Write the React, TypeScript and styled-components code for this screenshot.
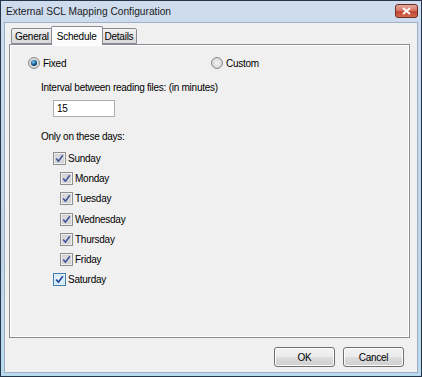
import React from 'react';
import styled, { createGlobalStyle } from 'styled-components';

const GlobalStyle = createGlobalStyle`
  html, body {
    margin: 0;
    padding: 0;
    background: #ffffff;
  }
  * {
    box-sizing: border-box;
  }
`;

const Window = styled.div`
  width: 422px;
  height: 377px;
  display: flex;
  flex-direction: column;
  border: 1px solid #24364a;
  background: linear-gradient(#cedcee, #c2d3e8 60%, #b9d9ec);
  padding: 0 3px 3px 3px;
  font-family: "Liberation Sans", Arial, sans-serif;
  font-size: 10px;
  letter-spacing: -0.25px;
  color: #000;
`;

const TitleBar = styled.div`
  height: 21px;
  display: flex;
  align-items: center;
  justify-content: space-between;
  padding: 0 0 0 2px;
`;

const Title = styled.span`
  font-size: 10.2px;
  letter-spacing: 0;
  color: #1b1b1b;
`;

const CloseButton = styled.div`
  width: 23px;
  height: 14px;
  margin-top: -1px;
  border: 1px solid #6d2d24;
  border-radius: 3px;
  background: linear-gradient(#e6a99c, #d4735f 50%, #c0432f 55%, #d46a4f);
  display: flex;
  align-items: center;
  justify-content: center;
`;

const Client = styled.div`
  flex: 1;
  display: flex;
  flex-direction: column;
  background: #f0f0f0;
  border: 1px solid #9eb0c6;
  padding: 3px 6px 0 4px;
`;

const TabStrip = styled.div`
  display: flex;
  align-items: flex-end;
  height: 18px;
  padding-left: 2px;
  position: relative;
  z-index: 1;
`;

const Tab = styled.div<{ $active?: boolean }>`
  height: ${({ $active }) => ($active ? '19px' : '16px')};
  margin: ${({ $active }) => ($active ? '0 -2px -1px -2px' : '0')};
  padding: ${({ $active }) => ($active ? '1px 5px 0 5px' : '1px 3px 0 3px')};
  display: flex;
  align-items: center;
  border: 1px solid #898c95;
  border-bottom: ${({ $active }) => ($active ? 'none' : '1px solid #898c95')};
  border-radius: 2px 2px 0 0;
  background: ${({ $active }) =>
    $active ? '#fcfcfc' : 'linear-gradient(#f2f2f2, #e3e3e3 50%, #d9d9d9)'};
  position: relative;
  z-index: ${({ $active }) => ($active ? 2 : 1)};
  & + & {
    border-left: ${({ $active }) => ($active ? '1px solid #898c95' : 'none')};
  }
`;

const Panel = styled.div`
  height: 294px;
  margin-right: 1px;
  border: 1px solid #898c95;
  box-shadow: inset 1px 1px 0 #ffffff, inset -1px -1px 0 #ffffff;
  background: #f0f0f0;
  padding: 10px 0 0 18px;
  display: flex;
  flex-direction: column;
`;

const RadioRow = styled.div`
  display: grid;
  grid-template-columns: 183px auto;
  height: 16px;
  align-items: center;
`;

const Option = styled.label`
  display: flex;
  align-items: center;
  gap: 3px;
`;

const Section = styled.div`
  margin-left: 13px;
  display: flex;
  flex-direction: column;
`;

const Label = styled.div<{ $top: number }>`
  margin-top: ${({ $top }) => $top}px;
  height: 14px;
  line-height: 14px;
`;

const TextBox = styled.div`
  margin: 5px 0 0 12px;
  width: 62px;
  height: 17px;
  border: 1px solid #abadb3;
  border-top-color: #abadb3;
  background: #ffffff;
  padding-left: 3px;
  line-height: 15px;
`;

const DayList = styled.div`
  margin-top: 4px;
  display: flex;
  flex-direction: column;
`;

const DayRow = styled.div<{ $indent: number }>`
  height: 20.3px;
  padding-left: ${({ $indent }) => $indent}px;
  display: flex;
  align-items: center;
  gap: 2px;
`;

const ButtonRow = styled.div`
  display: flex;
  justify-content: flex-end;
  gap: 8px;
  padding: 9px 7px 0 0;
`;

const Button = styled.div`
  width: 61px;
  height: 20px;
  border: 1px solid #707070;
  border-radius: 3px;
  background: linear-gradient(#f2f2f2, #ebebeb 50%, #dddddd 51%, #cfcfcf);
  box-shadow: inset 0 0 0 1px #fcfcfc;
  display: flex;
  align-items: center;
  justify-content: center;
`;

const Radio: React.FC<{ checked?: boolean }> = ({ checked }) => (
  <svg width="12" height="12" viewBox="0 0 12 12">
    <defs>
      <radialGradient id={checked ? 'rg1' : 'rg0'} cx="0.5" cy="0.5" r="0.5">
        <stop offset="0" stopColor="#f4f4f4" />
        <stop offset="1" stopColor="#d2d2d2" />
      </radialGradient>
      <radialGradient id="dot" cx="0.4" cy="0.35" r="0.6">
        <stop offset="0" stopColor="#8fd3f7" />
        <stop offset="0.6" stopColor="#1f6ca8" />
        <stop offset="1" stopColor="#0c3d6a" />
      </radialGradient>
    </defs>
    <circle cx="6" cy="6" r="5.5" fill={`url(#${checked ? 'rg1' : 'rg0'})`} stroke="#8b8b8b" />
    {checked && <circle cx="6" cy="6" r="3" fill="url(#dot)" />}
  </svg>
);

const Check: React.FC<{ hot?: boolean }> = ({ hot }) => (
  <svg width="13" height="13" viewBox="0 0 13 13">
    <rect x="0.5" y="0.5" width="12" height="12" fill="#ffffff" stroke={hot ? '#3c7fb1' : '#8e8f8f'} />
    <rect x="2" y="2" width="9" height="9" fill={hot ? '#e6f3fb' : '#d9d9d9'} stroke={hot ? '#a6cde8' : '#c4c4c4'} strokeWidth="0.6" />
    <path d="M3.2 6.6 L5.4 9.2 L9.8 3.2" fill="none" stroke={hot ? '#183f94' : '#40559a'} strokeWidth="1.6" strokeLinejoin="round" />
  </svg>
);

const days = [
  { name: 'Sunday', indent: 12 },
  { name: 'Monday', indent: 19 },
  { name: 'Tuesday', indent: 19 },
  { name: 'Wednesday', indent: 19 },
  { name: 'Thursday', indent: 19 },
  { name: 'Friday', indent: 19 },
  { name: 'Saturday', indent: 12, hot: true },
];

const App: React.FC = () => (
  <>
    <GlobalStyle />
    <Window>
      <TitleBar>
        <Title>External SCL Mapping Configuration</Title>
        <CloseButton>
          <svg width="9" height="8" viewBox="0 0 9 8">
            <path d="M1 1 L8 7 M8 1 L1 7" stroke="#ffffff" strokeWidth="2" />
          </svg>
        </CloseButton>
      </TitleBar>
      <Client>
        <TabStrip>
          <Tab>General</Tab>
          <Tab $active>Schedule</Tab>
          <Tab>Details</Tab>
        </TabStrip>
        <Panel>
          <RadioRow>
            <Option>
              <Radio checked />
              Fixed
            </Option>
            <Option>
              <Radio />
              Custom
            </Option>
          </RadioRow>
          <Section>
            <Label $top={10}>Interval between reading files: (in minutes)</Label>
            <TextBox>15</TextBox>
            <Label $top={13}>Only on these days:</Label>
            <DayList>
              {days.map((d) => (
                <DayRow key={d.name} $indent={d.indent}>
                  <Check hot={d.hot} />
                  {d.name}
                </DayRow>
              ))}
            </DayList>
          </Section>
        </Panel>
        <ButtonRow>
          <Button>OK</Button>
          <Button>Cancel</Button>
        </ButtonRow>
      </Client>
    </Window>
  </>
);

export default App;
